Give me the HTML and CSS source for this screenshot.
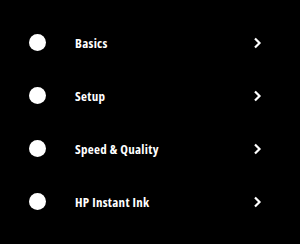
FILE: index.html
```html
<!DOCTYPE html>
<html lang="en">
<head>
    <meta charset="UTF-8">
    <meta name="viewport" content="width=device-width, initial-scale=1.0">
    <title>Help Topics</title>
    <link rel="stylesheet" href="styles.css">
</head>
<body>
    <ul class="menu">
        <li class="menu-item">
            <span class="dot"></span>
            <span class="label">Basics</span>
            <svg class="chevron" viewBox="0 0 10 12"><path d="M2 1.5 L6.5 6 L2 10.5"/></svg>
        </li>
        <li class="menu-item">
            <span class="dot"></span>
            <span class="label">Setup</span>
            <svg class="chevron" viewBox="0 0 10 12"><path d="M2 1.5 L6.5 6 L2 10.5"/></svg>
        </li>
        <li class="menu-item">
            <span class="dot"></span>
            <span class="label">Speed &amp; Quality</span>
            <svg class="chevron" viewBox="0 0 10 12"><path d="M2 1.5 L6.5 6 L2 10.5"/></svg>
        </li>
        <li class="menu-item">
            <span class="dot"></span>
            <span class="label">HP Instant Ink</span>
            <svg class="chevron" viewBox="0 0 10 12"><path d="M2 1.5 L6.5 6 L2 10.5"/></svg>
        </li>
    </ul>
</body>
</html>
```

FILE: styles.css
```css
body {
    margin: 0;
    background: #000;
    color: #fff;
    font-family: "Open Sans", "DejaVu Sans", sans-serif;
}
.menu {
    list-style: none;
    margin: 0;
    padding: 16px 0 0;
}
.menu-item {
    display: flex;
    align-items: center;
    height: 53px;
    padding-left: 29px;
}
.dot {
    width: 17px;
    height: 17px;
    border-radius: 50%;
    background: #fff;
    flex-shrink: 0;
}
.label {
    margin-left: 29px;
    font-size: 13px;
    font-weight: 700;
    font-stretch: 75%;
    letter-spacing: 0.3px;
    flex: 1;
}
.chevron {
    width: 10px;
    height: 12px;
    margin-right: 37px;
    fill: none;
    stroke: #fff;
    stroke-width: 2.2;
}
```
